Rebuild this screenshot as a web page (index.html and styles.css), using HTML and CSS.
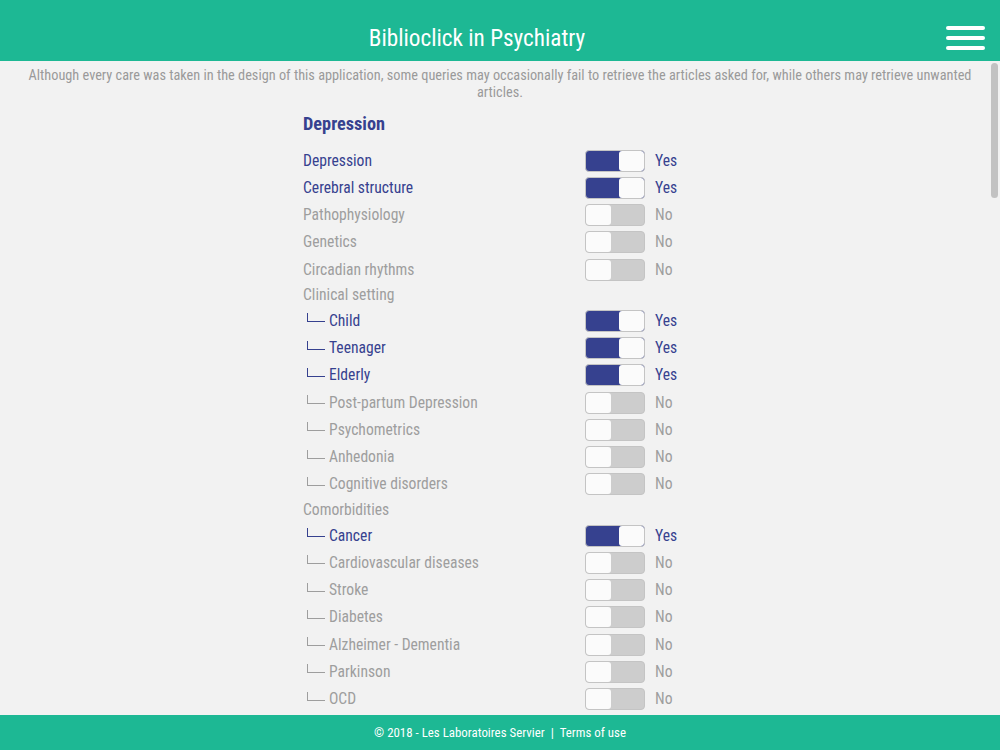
FILE: index.html
```html
<!DOCTYPE html>
<html lang="en">
<head>
  <meta charset="UTF-8" />
  <meta name="viewport" content="width=device-width, initial-scale=1.0" />
  <title>Biblioclick in Psychiatry</title>
  <link rel="stylesheet" href="styles.css">
</head>
<body>

  <header class="topbar">
    <h1 class="title">Biblioclick in Psychiatry</h1>
    <div class="menu-btn">
      <span></span><span></span><span></span>
    </div>
  </header>

  <main class="content">
    <p class="notice">Although every care was taken in the design of this application, some queries may occasionally fail to retrieve the articles asked for, while others may retrieve unwanted articles.</p>

    <div class="form">
      <h2 class="section">Depression</h2>

      <div class="row on"><span class="label">Depression</span><span class="switch"><span class="knob"></span></span><span class="state">Yes</span></div>
      <div class="row on"><span class="label">Cerebral structure</span><span class="switch"><span class="knob"></span></span><span class="state">Yes</span></div>
      <div class="row"><span class="label">Pathophysiology</span><span class="switch"><span class="knob"></span></span><span class="state">No</span></div>
      <div class="row"><span class="label">Genetics</span><span class="switch"><span class="knob"></span></span><span class="state">No</span></div>
      <div class="row"><span class="label">Circadian rhythms</span><span class="switch"><span class="knob"></span></span><span class="state">No</span></div>

      <!-- Clinical setting -->
      <div class="group">Clinical setting</div>
      <div class="row sub on"><span class="label"><i class="branch"></i>Child</span><span class="switch"><span class="knob"></span></span><span class="state">Yes</span></div>
      <div class="row sub on"><span class="label"><i class="branch"></i>Teenager</span><span class="switch"><span class="knob"></span></span><span class="state">Yes</span></div>
      <div class="row sub on"><span class="label"><i class="branch"></i>Elderly</span><span class="switch"><span class="knob"></span></span><span class="state">Yes</span></div>
      <div class="row sub"><span class="label"><i class="branch"></i>Post-partum Depression</span><span class="switch"><span class="knob"></span></span><span class="state">No</span></div>
      <div class="row sub"><span class="label"><i class="branch"></i>Psychometrics</span><span class="switch"><span class="knob"></span></span><span class="state">No</span></div>
      <div class="row sub"><span class="label"><i class="branch"></i>Anhedonia</span><span class="switch"><span class="knob"></span></span><span class="state">No</span></div>
      <div class="row sub"><span class="label"><i class="branch"></i>Cognitive disorders</span><span class="switch"><span class="knob"></span></span><span class="state">No</span></div>

      <!-- Comorbidities -->
      <div class="group">Comorbidities</div>
      <div class="row sub on"><span class="label"><i class="branch"></i>Cancer</span><span class="switch"><span class="knob"></span></span><span class="state">Yes</span></div>
      <div class="row sub"><span class="label"><i class="branch"></i>Cardiovascular diseases</span><span class="switch"><span class="knob"></span></span><span class="state">No</span></div>
      <div class="row sub"><span class="label"><i class="branch"></i>Stroke</span><span class="switch"><span class="knob"></span></span><span class="state">No</span></div>
      <div class="row sub"><span class="label"><i class="branch"></i>Diabetes</span><span class="switch"><span class="knob"></span></span><span class="state">No</span></div>
      <div class="row sub"><span class="label"><i class="branch"></i>Alzheimer - Dementia</span><span class="switch"><span class="knob"></span></span><span class="state">No</span></div>
      <div class="row sub"><span class="label"><i class="branch"></i>Parkinson</span><span class="switch"><span class="knob"></span></span><span class="state">No</span></div>
      <div class="row sub"><span class="label"><i class="branch"></i>OCD</span><span class="switch"><span class="knob"></span></span><span class="state">No</span></div>
    </div>
  </main>

  <div class="scroll-thumb"></div>

  <footer class="footer">
    © 2018 - Les Laboratoires Servier&nbsp; | &nbsp;Terms of use
  </footer>

</body>
</html>
```

FILE: styles.css
```css
html, body {
  height: 100%;
}
body {
  margin: 0;
  background-color: #f2f2f2;
  font-family: "Roboto Condensed", Roboto, "Liberation Sans", sans-serif;
  display: flex;
  flex-direction: column;
  overflow: hidden;
}

/* Barre du haut */
.topbar {
  flex: 0 0 61px;
  box-sizing: border-box;
  padding: 15px 15px 0 0;
  background-color: #1db894;
  display: flex;
  align-items: center;
  color: white;
}
.title {
  flex: 1;
  margin: 0;
  padding-left: 8px;
  text-align: center;
  font-size: 23.2px;
  font-weight: normal;
}
.menu-btn {
  width: 39px;
  display: flex;
  flex-direction: column;
  gap: 6px;
}
.menu-btn span {
  display: block;
  height: 4px;
  border-radius: 2px;
  background-color: white;
}

/* Zone de contenu */
.content {
  flex: 1;
  overflow: hidden;
  padding-top: 6px;
}
.notice {
  margin: 0 25px;
  text-align: center;
  color: #9a9a9a;
  font-size: 14.3px;
  line-height: 17px;
}
.form {
  width: 394px;
  margin: 0 auto;
}
.section {
  margin: 11px 0 11px;
  font-size: 18.3px;
  line-height: 24px;
  font-weight: bold;
  color: #36418f;
}
.group {
  height: 24px;
  line-height: 24px;
  font-size: 15.6px;
  color: #9e9e9e;
}
.row {
  height: 27.25px;
  display: flex;
  align-items: center;
  font-size: 15.6px;
  color: #9e9e9e;
}
.row.on {
  color: #36418f;
}
.label {
  flex: 0 0 282px;
  display: flex;
  align-items: center;
}
.sub .label {
  padding-left: 4px;
  box-sizing: border-box;
}
.branch {
  width: 17px;
  height: 8px;
  margin: -6px 4px 0 0;
  border-left: 1.5px solid currentColor;
  border-bottom: 1.5px solid currentColor;
}
.state {
  margin-left: 10px;
}

/* Interrupteur */
.switch {
  width: 60px;
  height: 22px;
  box-sizing: border-box;
  border: 1px solid #c4c4c4;
  border-radius: 4px;
  background-color: #cdcdcd;
  overflow: hidden;
  display: flex;
}
.knob {
  width: 25px;
  background-color: #fbfbfb;
  border-radius: 3px;
}
.on .switch {
  background-color: #36418f;
  justify-content: flex-end;
}

.scroll-thumb {
  position: fixed;
  top: 63px;
  right: 2px;
  width: 7px;
  height: 135px;
  border-radius: 4px;
  background-color: #c2c2c2;
}

/* Rodapé */
.footer {
  flex: 0 0 35px;
  background-color: #1db894;
  color: white;
  font-size: 12.9px;
  text-align: center;
  line-height: 35px;
}
```
